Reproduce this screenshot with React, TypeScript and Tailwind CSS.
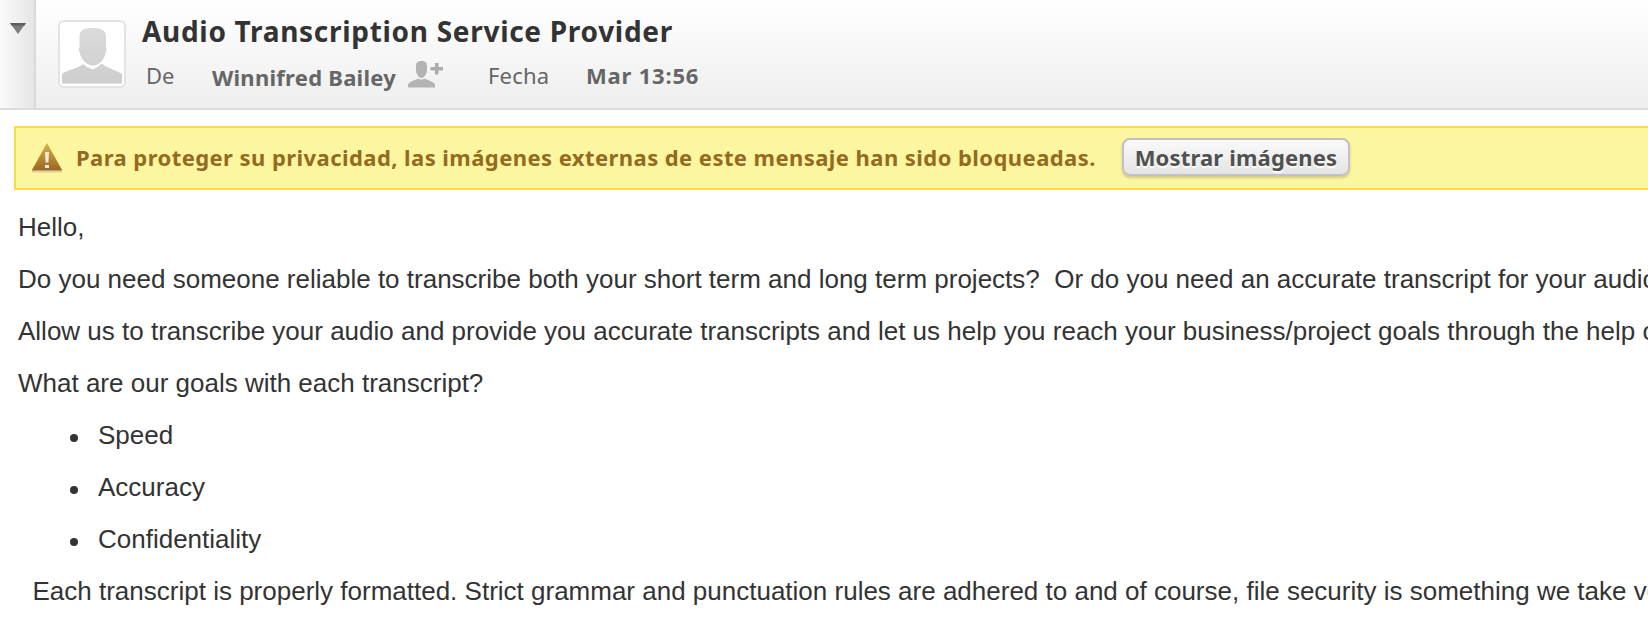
const PARAGRAPHS = [
  'Hello,',
  'Do you need someone reliable to transcribe both your short term and long term projects?\u00a0 Or do you need an accurate transcript for your audio',
  'Allow us to transcribe your audio and provide you accurate transcripts and let us help you reach your business/project goals through the help of',
  'What are our goals with each transcript?',
];
const GOALS = ['Speed', 'Accuracy', 'Confidentiality'];

function Avatar() {
  return (
    <div className="h-[68px] w-[68px] shrink-0 rounded-[6px] border-2 border-[#e3e3e3] bg-white">
      <svg width="64" height="64" viewBox="0 0 64 64">
        <defs>
          <linearGradient id="person" x1="0" y1="0" x2="0" y2="1">
            <stop offset="0" stopColor="#dadada" />
            <stop offset="1" stopColor="#cecece" />
          </linearGradient>
        </defs>
        <path
          fill="url(#person)"
          d="M19.500 14C19.500 8.500 24 6 32.500 6S46 8.500 46 14v11c.7 1.500.5 4.500-.5 6C45 36 40 43.500 33 43.500S20.500 36 20 31c-1.200-1.500-1.500-4.500-.5-6zM2 61.500V52c4-3.500 15-5.500 21.500-10C25.500 44.500 29 46 32.500 47.500 36 46 39.500 44 41.500 41.500 48 46.500 57 48.500 62 52v9.500z"
        />
      </svg>
    </div>
  );
}

function AddContact() {
  return (
    <svg className="mt-2.5 shrink-0" width="36" height="27" viewBox="0 0 36 27">
      <path fill="#b3b3b3" d="M8 6c0-4.500 1.500-6 5.500-6S19 1.500 19 6v3c0 4-3 8-5.500 8S8 13 8 9zM0 26.500v-3C2 20 7 19.500 10 17.500c1.500 1.300 5 1.300 6.500 0 3 2 8.500 2.500 10.500 6v3z" />
      <path fill="#ababab" d="M27 2h3.500v4H35v3.500h-4.500v4H27v-4h-4.500V6H27z" />
    </svg>
  );
}

function Header() {
  return (
    <header className="flex h-[110px] border-b-2 border-[#dcdcdc]">
      <div className="flex w-9 shrink-0 justify-end border-r-2 border-[#dadada] bg-linear-to-r from-[#fbfbfb] to-[#e5e5e5]">
        <svg className="mr-[7px] mt-[22px]" width="18" height="12" viewBox="0 0 18 12">
          <path d="M1 1h16L9 12z" fill="#7c7c7c" />
          <path d="M1 1h16l-1.500 2.500h-13z" fill="#5f5f5f" />
        </svg>
      </div>
      <div className="flex flex-1 bg-linear-to-b from-white to-[#eeeeee] pl-[22px] pt-5">
        <Avatar />
        <div className="-mt-[9px] ml-4 font-['Noto_Sans',sans-serif]">
          <h1 className="h-10 text-[28px] leading-10 font-bold tracking-[0.7px] whitespace-nowrap text-[#333]">
            Audio Transcription Service Provider
          </h1>
          <div className="ml-1 flex text-[22px] leading-8 whitespace-nowrap text-[#666]">
            <span className="mt-2 w-[66px]">De</span>
            <span className="mt-2.5 w-[196px] font-bold tracking-[0.26px]">Winnifred Bailey</span>
            <AddContact />
            <span className="mt-2 ml-11 w-[98px] tracking-[0.2px]">Fecha</span>
            <span className="mt-2 font-bold tracking-[0.8px]">Mar 13:56</span>
          </div>
        </div>
      </div>
    </header>
  );
}

function WarningIcon() {
  return (
    <svg className="shrink-0" width="32" height="32" viewBox="0 0 32 32">
      <defs>
        <linearGradient id="warn" x1="0" y1="0" x2="0" y2="1">
          <stop offset="0" stopColor="#dbb247" />
          <stop offset="1" stopColor="#996623" />
        </linearGradient>
      </defs>
      <path d="M1 30.500h30" stroke="#dccfa0" strokeWidth="2" />
      <path d="M16 2 31.300 29.500H.7z" fill="url(#warn)" />
      <path d="M14 11h4l-.6 10.500h-2.800zM14 24h4v3h-4z" fill="#f3ebda" />
    </svg>
  );
}

function PrivacyBanner() {
  return (
    <div className="mt-4 ml-3.5 flex h-16 items-center border-2 border-r-0 border-[#fbdb4e] bg-[#fdf6a0] pb-0.5 pl-[15px] font-['Noto_Sans',sans-serif] text-[22px] font-bold whitespace-nowrap">
      <WarningIcon />
      <span className="ml-[13px] w-[1046px] tracking-[0.435px] text-[#946a20]">
        Para proteger su privacidad, las imágenes externas de este mensaje han sido bloqueadas.
      </span>
      <button className="flex h-[38px] w-[228px] shrink-0 items-center justify-center rounded-[8px] border-2 border-[#c2c0c4] bg-linear-to-b from-[#fafafa] to-[#e4e4e4] tracking-[0.17px] text-[#505050] shadow-[0_2px_3px_rgba(0,0,0,0.18)] text-shadow-[0_2px_1px_rgba(255,255,255,0.9)]">
        Mostrar imágenes
      </button>
    </div>
  );
}

export default function App() {
  return (
    <div className="h-[624px] w-[1648px] overflow-hidden bg-white">
      <Header />
      <PrivacyBanner />
      <main className="flex flex-col gap-[22px] pt-[22px] pl-[18px] font-['Liberation_Sans',Arial,sans-serif] text-[26px] leading-[30px] whitespace-nowrap text-[#333]">
        {PARAGRAPHS.map((text) => (
          <p key={text}>{text}</p>
        ))}
        <ul className="flex flex-col gap-[22px] pl-[52px]">
          {GOALS.map((goal) => (
            <li key={goal} className="flex items-center">
              <span className="mt-1.5 mr-5 size-2 rounded-full bg-[#333]" />
              {goal}
            </li>
          ))}
        </ul>
        <p className="pl-[14.5px]">
          Each transcript is properly formatted. Strict grammar and punctuation rules are adhered to and of course, file security is something we take very
        </p>
      </main>
    </div>
  );
}
